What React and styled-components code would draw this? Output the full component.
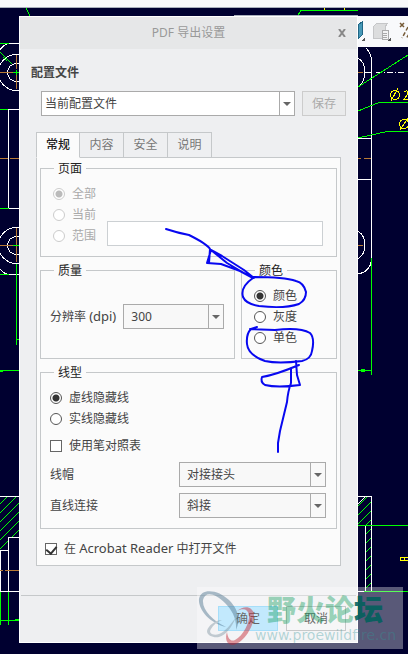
import React, { useState } from 'react';
import styled, { createGlobalStyle, css } from 'styled-components';

const GlobalStyle = createGlobalStyle`
	* {
		box-sizing: border-box;
	}
	body {
		margin: 0;
		background: #000030;
		color: #444;
		font: 12px/18px 'Noto Sans', 'Noto Sans CJK SC', sans-serif;
	}
	button,
	input,
	select {
		font: inherit;
		color: inherit;
	}
`;

const tabs = ['常规', '内容', '安全', '说明'];

const Drawing = () => (
	<DrawingSvg width='408' height='654' viewBox='0 0 408 654' fill='none' aria-hidden='true'>
		<defs>
			<pattern id='hatch' width='9' height='9' patternUnits='userSpaceOnUse'>
				<path d='M-1 10L10 -1' stroke='#00ff00' />
			</pattern>
		</defs>
		<path fill='#f8f9fb' d='M0 0H408V7H0ZM358 16H408V47H358Z' />
		<path stroke='#a9b0bc' d='M0 7.5H408M234 15.5H358' />
		{/* hatched sections */}
		<path fill='url(#hatch)' d='M0 497H19V537H8V550H0ZM358 497H371V525H358ZM366 526H371V591H366Z' />
		{/* part outlines */}
		<g stroke='#fff'>
			<path d='M9 43.5H19M0 50Q4 44 9 43.5M8 109.5H19M8.5 110V208M9 208.5H19M0 269Q4 274 9 274.5H19' />
			<circle cx='16.5' cy='72.5' r='18' />
			<circle cx='16.5' cy='72.5' r='9' />
			<circle cx='16.5' cy='245.5' r='18' />
			<circle cx='16.5' cy='245.5' r='9' />
			<path d='M0 496.5H19M8.5 592V537.5H19M0 550.5H8M0.5 551V591M0 591.5H19' />
			<path d='M366 48Q371 53 371.5 60V260Q370 272 358 274M358 58Q365 62 365 72Q365 82 358 87M358 231Q365 236 365 245Q365 254 358 259' />
			<path d='M364 72.5H371M358 138.5H371M358 179.5H371' />
			<path d='M376 72.5H405' strokeDasharray='6 2 1 2' />
			<path d='M358 496.5H371.5V591M365.5 526V591M358 591.5H365M358 504L365 497' />
		</g>
		<path
			stroke='#b87a35'
			d='M0 72.5H13M16.5 55V69M16.5 72V89M0 158.5H8M10 158.5H19M0 245.5H13M16.5 228V262M0 570.5H3M5 570.5H19M358 72.5H363M358 158.5H361M364 158.5H371M358 245.5H363'
		/>
		{/* dimensions */}
		<g stroke='#00ff00'>
			<path d='M26 8L30 16M0 43.5H9M0 52L12 64M3 57L7 61M13 72.5H19M16.5 70V75M0 109.5H8M0 208.5H9M13 245.5H19M0 274.5H9M16.5 264V345M16 339.5H19M0 370.5H19M0 371.5H3' />
			<path d='M0.5 592V625M8.5 592V625M0 620.5H19M15 619.5H19' />
			<path d='M298 15L301 10.5H358M358 87L408 55M358 111L379 102.5H408M358 138L387 131.5H408' />
			<path d='M371.5 258V375M358 370.5H371M361 369.5H365M361 371.5H365M358 525.5H408M364 591.5H408' />
		</g>
		<g stroke='#ffff00'>
			<circle cx='395' cy='95' r='4.5' />
			<path d='M391 101L398 88M400 130L408 118M324 8V10M344 8V10M408 557.5H400.5V560H408M404 557V560' />
			<circle cx='404' cy='124' r='4.5' />
			<path d='M404 92Q408 89 408 94L404 99H408' />
		</g>
		{/* view toolbar */}
		<path d='M358 25L362 22V35L358 39Z' fill='#4799b8' stroke='#216685' />
		<path d='M365 37V41H361ZM391 37V41H387Z' fill='#555' />
		<path d='M373 27L377 23H388L385 27V38H373Z' fill='#dcddde' stroke='#c5c6c8' />
		<path d='M382 30H388V39H382ZM383 33H387M383 35H387M383 37H387' fill='#f4f4f4' stroke='#aaa' />
		<g stroke='#765b37' strokeWidth='1.5' shapeRendering='auto'>
			<path d='M400 23L404 27M404 23L400 27' />
			<path d='M408 27L402 38M409 34L406 39' strokeDasharray='4 2' />
		</g>
	</DrawingSvg>
);

const Markup = () => (
	<MarkupSvg width='408' height='654' viewBox='0 0 408 654' aria-hidden='true'>
		<path d='M166 229Q178 233 189 235Q207 244 210 249L209 263M211 250L222 256L244 270L254 278M211 250L207 263L221 264L240 271L253 278M211 250L227 263L249 276' />
		<path d='M253 278Q240 287 243 297Q246 304 259 306Q284 309 299 304Q306 300 306 292Q304 283 296 281Q284 277 253 277' />
		<path d='M257 327L251 329Q246 334 247 344Q248 355 265 361Q278 364 302 361Q311 359 312 351Q315 338 310 333Q300 327 275 330L250 329' />
		<path d='M296 361L297 375L300 385Q277 388 265 385Q260 382 262 377Q275 375 299 365M291 368L291 383Q288 391 287 402L280 431L278 443V452' />
	</MarkupSvg>
);

const Watermark = () => (
	<Stamp aria-hidden='true'>
		<Logo width='62' height='62' viewBox='0 0 62 62' fill='none'>
			<path d='M29 40C12 36 1 22 2 12C4 0 22 3 32 13C41 22 44 32 39 43C40 32 35 23 28 16C18 6 8 4 6 13C5 23 16 34 29 40Z' fill='#49718c' />
			<path d='M25 33C18 33 11 39 10 44C10 49 17 51 22 50C29 48 35 40 39 30C34 37 28 45 22 47C16 49 11 46 14 42C16 38 20 35 25 33Z' fill='#8297a3' />
			<path d='M40 24C47 18 56 19 57 28C57 39 47 56 36 58C29 58 28 51 30 45C31 52 34 55 38 53C46 49 53 35 52 28C51 22 46 21 40 24Z' fill='#c3202d' />
		</Logo>
		<StampText>
			<strong>
				野火论<em>坛</em>
			</strong>
			<span>www.proewildfire.cn</span>
		</StampText>
	</Stamp>
);

const Dropdown = ({ id, options, ...look }) => (
	<SelectBox {...look}>
		<select id={id}>
			{options.map((item) => (
				<option key={item}>{item}</option>
			))}
		</select>
		<Arrow />
	</SelectBox>
);

const RadioList = ({ name, options, initial, disabled }) => {
	const [value, setValue] = useState(initial);
	return options.map((item) => (
		<Choice key={item} $disabled={disabled}>
			<Radio
				type='radio'
				name={name}
				checked={value === item}
				disabled={disabled}
				onChange={() => setValue(item)}
			/>
			{item}
		</Choice>
	));
};

const App = () => {
	const [tab, setTab] = useState(tabs[0]);
	return (
		<Page>
			<GlobalStyle />
			<Drawing />
			<Dialog role='dialog' aria-labelledby='dialog-title'>
				<Header>
					<Title id='dialog-title'>PDF 导出设置</Title>
					<Close type='button' aria-label='关闭'>
						<svg width='8' height='8' viewBox='0 0 8 8'>
							<path d='M1 0L7 8M7 0L1 8' stroke='#888' strokeWidth='2' />
						</svg>
					</Close>
				</Header>
				<Body>
					<Heading htmlFor='profile'>配置文件</Heading>
					<ProfileRow>
						<Dropdown id='profile' options={['当前配置文件']} $white $grow />
						<Button type='button' disabled>
							保存
						</Button>
					</ProfileRow>
					<Tabs role='tablist'>
						{tabs.map((item) => (
							<Tab
								key={item}
								type='button'
								role='tab'
								aria-selected={tab === item}
								$active={tab === item}
								onClick={() => setTab(item)}
							>
								{item}
							</Tab>
						))}
					</Tabs>
					<Panel role='tabpanel'>
						<Group $indent>
							<legend>页面</legend>
							<RadioList name='page' options={['全部', '当前']} initial='全部' disabled />
							<RangeRow>
								<Choice $disabled>
									<Radio type='radio' name='page' disabled />
									范围
								</Choice>
								<RangeInput type='text' aria-label='范围' disabled />
							</RangeRow>
						</Group>
						<Columns>
							<Group>
								<legend>质量</legend>
								<DpiRow>
									<label htmlFor='dpi'>
										分辨率 <Latin>(dpi)</Latin>
									</label>
									<Dropdown id='dpi' options={['300']} $grow />
								</DpiRow>
							</Group>
							<Group $indent>
								<legend>颜色</legend>
								<RadioList name='color' options={['颜色', '灰度', '单色']} initial='颜色' />
							</Group>
						</Columns>
						<Group>
							<legend>线型</legend>
							<RadioList name='line' options={['虚线隐藏线', '实线隐藏线']} initial='虚线隐藏线' />
							<LineOptions>
								<Choice>
									<Check type='checkbox' />
									使用笔对照表
								</Choice>
								<Field>
									<label htmlFor='cap'>线帽</label>
									<Dropdown id='cap' options={['对接接头']} $wide />
								</Field>
								<Field>
									<label htmlFor='join'>直线连接</label>
									<Dropdown id='join' options={['斜接']} $wide />
								</Field>
							</LineOptions>
						</Group>
						<OpenAfter>
							<Check type='checkbox' defaultChecked />
							<span>
								在 <Latin>Acrobat Reader</Latin> 中打开文件
							</span>
						</OpenAfter>
					</Panel>
				</Body>
				<Footer>
					<Button type='button' $primary $large>
						确定
					</Button>
					<Button type='button' $large>
						取消
					</Button>
				</Footer>
			</Dialog>
			<Markup />
			<Watermark />
		</Page>
	);
};

export default App;

const Page = styled.div`
	position: relative;
	min-height: 100vh;
	padding: 16px 50px 11px 19px;
	overflow: hidden;
`;

const DrawingSvg = styled.svg`
	position: absolute;
	top: 0;
	left: 0;
	shape-rendering: crispEdges;
`;

const MarkupSvg = styled.svg`
	position: absolute;
	top: 0;
	left: 0;
	pointer-events: none;
	fill: none;
	stroke: #0808f0;
	stroke-width: 2;
	stroke-linejoin: round;
	stroke-linecap: round;
`;

const Dialog = styled.main`
	position: relative;
	background: #eeeff1;
	border: 1px solid #fff;
`;

const Header = styled.header`
	display: grid;
	grid-template-columns: 24px 1fr 24px;
	align-items: center;
	height: 32px;
	padding: 0 3px;
	background: #e6e7e8;
`;

const Title = styled.h1`
	grid-column: 2;
	margin: 0;
	font-size: 12px;
	font-weight: 400;
	text-align: center;
	color: #999;
`;

const Close = styled.button`
	display: flex;
	justify-content: center;
	padding: 4px;
	border: 0;
	background: none;
`;

const Body = styled.div`
	padding: 15px 16px 0;
`;

const Heading = styled.label`
	display: block;
	margin-left: -5px;
	font-weight: 700;
`;

const ProfileRow = styled.div`
	display: flex;
	gap: 7px;
	margin: 9px -5px 16px 5px;
`;

const Latin = styled.span`
	font-size: 13px;
`;

const SelectBox = styled.div`
	display: flex;
	height: 25px;
	border: 1px solid #aaa;
	background: ${(props) => (props.$white ? '#fff' : '#f8f8f8')};
	${(props) => props.$grow && 'flex: 1;'}
	${(props) => props.$wide && 'width: 147px;'}
	select {
		flex: 1;
		min-width: 0;
		padding: 0 ${(props) => (props.$white ? '3px' : '7px')};
		border: 0;
		background: transparent;
		appearance: none;
	}
`;

const Arrow = styled.span`
	display: flex;
	align-items: center;
	justify-content: center;
	width: 15px;
	border-left: 1px solid #aaa;
	&::after {
		content: '';
		border: 4px solid transparent;
		border-top-color: #666;
		border-bottom: 0;
	}
`;

const Button = styled.button`
	width: ${(props) => (props.$large ? '60px' : '44px')};
	height: 25px;
	padding: 0;
	border: 1px solid ${(props) => (props.$primary ? '#78ccf6' : '#aaacae')};
	background: ${(props) => (props.$primary ? '#a2ddfc' : '#f1f2f3')};
	color: #111;
	&:disabled {
		color: #aaa;
		border-color: #ccc;
		background: #eaebec;
	}
`;

const Tabs = styled.div`
	display: flex;
`;

const Tab = styled.button`
	width: 44px;
	height: 26px;
	padding: 0;
	border: 1px solid #c5c8ca;
	border-left-width: 0;
	background: #eeeff1;
	color: #777;
	&:first-child {
		border-left-width: 1px;
	}
	${(props) =>
		props.$active &&
		css`
			/* sits above the panel's top edge */
			z-index: 1;
			border-bottom-color: #fbfbfb;
			background: #fbfbfb;
			color: #222;
			font-weight: 500;
		`}
`;

const Panel = styled.div`
	display: flex;
	flex-direction: column;
	gap: 5px;
	margin-top: -1px;
	padding: 2px 3px 6px;
	border: 1px solid #c5c8ca;
	background: #fbfbfb;
`;

const Group = styled.fieldset`
	min-width: 0;
	margin: 0;
	padding: 6px 10px 10px ${(props) => (props.$indent ? '12px' : '9px')};
	border: 1px solid #c5c8ca;
	legend {
		margin-left: ${(props) => (props.$indent ? '1px' : '4px')};
		padding: 0 4px;
		line-height: 17px;
		color: #222;
	}
`;

const Columns = styled.div`
	display: grid;
	grid-template-columns: 1fr 96px;
	gap: 6px;
`;

const Choice = styled.label`
	display: flex;
	align-items: center;
	gap: 7px;
	height: 21px;
	color: ${(props) => (props.$disabled ? '#aaa' : '#444')};
`;

const Radio = styled.input`
	flex: none;
	width: 12px;
	height: 12px;
	margin: 0;
	border: 1px solid #555;
	border-radius: 50%;
	background: #fff;
	appearance: none;
	&:checked {
		background: radial-gradient(circle, #333 0 3px, #fff 4px);
	}
	&:disabled {
		border-color: #ccc;
	}
	&:checked:disabled {
		background: radial-gradient(circle, #bbb 0 3px, #fff 4px);
	}
`;

const Check = styled.input`
	display: grid;
	place-items: center;
	flex: none;
	width: 12px;
	height: 12px;
	margin: 0;
	border: 1px solid #666;
	background: #fff;
	appearance: none;
	&:checked::after {
		content: '';
		width: 5px;
		height: 8px;
		margin-bottom: 2px;
		border: solid #333;
		border-width: 0 2px 2px 0;
		transform: rotate(40deg);
	}
`;

const RangeRow = styled.div`
	display: flex;
	align-items: flex-end;
	gap: 11px;
	height: 21px;
	padding-right: 3px;
`;

const RangeInput = styled.input`
	flex: 1;
	min-width: 0;
	height: 25px;
	border: 1px solid #ccd0d3;
	background: #fff;
`;

const DpiRow = styled.div`
	display: flex;
	align-items: center;
	gap: 7px;
	padding-top: 19px;
`;

const LineOptions = styled.div`
	display: grid;
	gap: 6px;
	padding-top: 6px;
`;

const Field = styled.div`
	display: flex;
	align-items: center;
	justify-content: space-between;
`;

const OpenAfter = styled(Choice)`
	margin: 4px 0 0 5px;
`;

const Footer = styled.footer`
	display: flex;
	justify-content: flex-end;
	gap: 8px;
	margin: 29px 1px 0;
	padding: 10px 10px 11px;
	border-top: 1px solid #c5c8ca;
`;

const Stamp = styled.div`
	position: absolute;
	left: 197px;
	top: 587px;
	width: 206px;
	height: 62px;
	background: rgba(255, 255, 255, 0.35);
	pointer-events: none;
`;

const Logo = styled.svg`
	position: absolute;
	left: 0;
	top: 0;
	opacity: 0.45;
`;

const StampText = styled.div`
	position: absolute;
	left: 58px;
	top: 4px;
	display: grid;
	strong {
		padding-left: 12px;
		font: 900 29px/34px 'Noto Sans CJK SC', sans-serif;
		color: rgba(0, 150, 80, 0.38);
	}
	em {
		font-style: normal;
		color: rgba(0, 96, 92, 0.9);
	}
	span {
		font: 14px/20px 'DejaVu Sans', sans-serif;
		color: rgba(50, 150, 150, 0.35);
	}
`;
